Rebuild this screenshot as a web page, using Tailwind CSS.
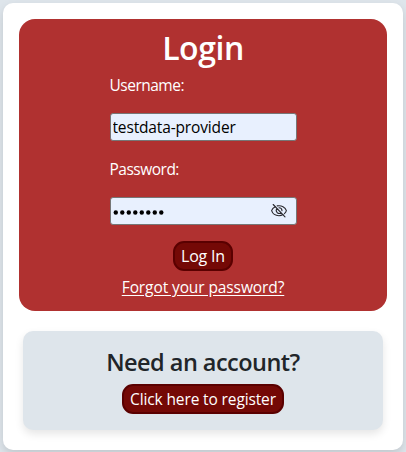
<!DOCTYPE html>
<html lang="en">
<head>
<meta charset="utf-8">
<title>Login</title>
<script src="https://cdn.jsdelivr.net/npm/@tailwindcss/browser@4"></script>
</head>
<body class="h-[452px] overflow-hidden bg-[#dee5eb] pt-[3px] pl-[3px] font-['Open_Sans','Noto_Sans',sans-serif] text-base">
<main class="flex h-[447px] w-[400px] flex-col items-center rounded-[10px] bg-white pt-4 shadow-[0_4px_8px_rgba(0,0,0,0.13)]">
  <form class="flex h-[292px] w-[368px] flex-col items-center rounded-2xl bg-[#b03130] pt-[10px] text-white">
    <h1 class="h-11 text-[32px] leading-[38px] font-semibold tracking-[-0.45px]">Login</h1>
    <div class="flex w-[187px] flex-col">
      <label for="user" class="h-10 text-[15.5px] leading-6 tracking-[-0.5px]">Username:</label>
      <input id="user" type="text" value="testdata-provider" class="h-7 w-full rounded-[3px] border border-[#767676] bg-[#e8f0fe] px-[2px] text-[15.5px] tracking-[-0.15px] text-black">
      <label for="pass" class="mt-4 h-10 text-[15.5px] leading-6 tracking-[-0.5px]">Password:</label>
      <div class="flex h-7 items-center justify-between rounded-[3px] border border-[#767676] bg-[#e8f0fe] pr-[9px] pl-[2px]">
        <svg class="mt-[2px] h-[5px] w-[52px]" viewBox="0 0 52 5" fill="#000">
          <circle cx="2.800" cy="2.500" r="2.200"/><circle cx="9.300" cy="2.500" r="2.200"/><circle cx="15.800" cy="2.500" r="2.200"/><circle cx="22.300" cy="2.500" r="2.200"/><circle cx="28.800" cy="2.500" r="2.200"/><circle cx="35.300" cy="2.500" r="2.200"/><circle cx="41.800" cy="2.500" r="2.200"/><circle cx="48.300" cy="2.500" r="2.200"/>
        </svg>
        <svg class="h-4 w-4" viewBox="0 0 16 16" fill="none" stroke="#29292e" stroke-width="1.1" stroke-linecap="round">
          <path d="M4.200 3.700C2.200 4.700 1 6.400.6 7.700c1 3 4 5 7.400 5 1.500 0 2.800-.4 4-1.100M6.200 2.900C10.500 2 14.300 4.200 15.400 7.700c-.4 1.200-1.100 2.100-2 2.900"/>
          <path d="M5.900 5.600a3 3 0 0 0 4.200 4.200M8 4.700a3 3 0 0 1 3 3M2.200 1.500l11.800 12.300"/>
        </svg>
      </div>
    </div>
    <button type="button" class="mt-4 h-[30px] w-[60px] rounded-[11px] border-2 border-[#5a0000] bg-[#740906] text-[16px] leading-[26px] tracking-[-0.2px]">Log In</button>
    <a href="#" class="mt-1 text-[15.5px] leading-6 tracking-[-0.1px] whitespace-nowrap underline underline-offset-2">Forgot your password?</a>
  </form>
  <section class="mt-5 flex h-[99px] w-[360px] flex-col items-center rounded-[10px] bg-[#dee5eb] pt-4 text-[#212529] shadow-[0_4px_8px_rgba(0,0,0,0.1)]">
    <h2 class="h-[37px] text-[23.5px] leading-[31px] font-semibold tracking-[-0.53px] whitespace-nowrap">Need an account?</h2>
    <button type="button" class="h-[30px] w-[162px] rounded-[11px] border-2 border-[#5a0000] bg-[#740906] text-[15.5px] leading-[26px] tracking-[-0.13px] whitespace-nowrap text-white">Click here to register</button>
  </section>
</main>
</body>
</html>
